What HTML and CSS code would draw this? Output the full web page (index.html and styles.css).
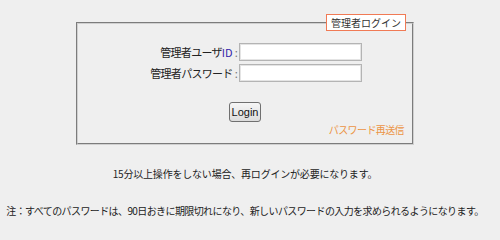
FILE: index.html
```html
<!DOCTYPE html>
<html lang="ja">
<head>
  <meta charset="UTF-8" />
  <title>管理者ログイン</title>
  <link rel="stylesheet" href="styles.css">
</head>
<body>
  <form class="login" method="POST" action="/login">
    <fieldset class="panel">
      <legend class="panel-title">管理者ログイン</legend>
      <div class="fields">
        <label class="field-label" for="uid">管理者ユーザ<span class="em">ID</span><span class="colon">:</span></label>
        <input class="field-input" id="uid" name="uid" type="text" />
        <label class="field-label" for="pw">管理者パスワード<span class="colon">:</span></label>
        <input class="field-input" id="pw" name="pw" type="password" />
      </div>
      <div class="actions">
        <button class="login-btn" type="submit">Login</button>
      </div>
      <div class="resend"><a href="#">パスワード再送信</a></div>
    </fieldset>
  </form>
  <p class="note">15分以上操作をしない場合、再ログインが必要になります。</p>
  <p class="note note-small">注：すべてのパスワードは、90日おきに期限切れになり、新しいパスワードの入力を求められるようになります。</p>
</body>
</html>
```

FILE: styles.css
```css
html, body {
  margin: 0;
  background: #efefef;
  font-family: "Noto Sans CJK JP", "Noto Sans", sans-serif;
  color: #222;
}
.login {
  margin: 0;
  padding-top: 14px;
}
.panel {
  margin: 0 0 0 76px;
  width: 338px;
  box-sizing: border-box;
  padding: 0 8px 6px 8px;
  border: 2px groove #d0d0d0;
  min-width: 0;
}
.panel-title {
  margin-left: auto;
  margin-right: -2px;
  padding: 0 4px;
  height: 17px;
  box-sizing: border-box;
  border: 1px solid #f07a55;
  background: #fff;
  font-size: 10px;
  line-height: 15px;
  color: #333;
}
.fields {
  display: grid;
  grid-template-columns: 90px 123px;
  column-gap: 2px;
  row-gap: 3px;
  margin: 12px 0 0 61px;
}
.field-label {
  text-align: right;
  font-size: 11px;
  line-height: 18px;
  color: #222;
  letter-spacing: -0.7px;
}
.field-label .em {
  color: #3322aa;
  letter-spacing: 0;
}
.field-label .colon {
  color: #777;
  margin-left: 2px;
}
.field-input {
  height: 18px;
  box-sizing: border-box;
  border: 1px solid #b4b4b4;
  box-shadow: inset 0 0 0 1px #e4e4e4;
  background: #fff;
  padding: 0 3px;
  font-size: 11px;
  margin: 0;
  outline: none;
}
.actions {
  display: flex;
  justify-content: center;
  margin-top: 20px;
}
.login-btn {
  height: 20px;
  padding: 0 2px;
  font-family: "Liberation Sans", Arial, sans-serif;
  font-size: 11px;
  color: #111;
  background: linear-gradient(#f6f6f6, #dcdcdc);
  border: 1px solid #707070;
  border-radius: 3px;
  cursor: pointer;
}
.resend {
  text-align: right;
  margin-top: 1px;
  font-size: 10px;
  line-height: 14px;
  letter-spacing: -0.6px;
}
.resend a {
  color: #ec9444;
  text-decoration: none;
}
.note {
  width: 490px;
  margin: 23px 0 0 0;
  text-align: center;
  font-size: 10px;
  line-height: 14px;
  color: #222;
  letter-spacing: -0.2px;
}
.note:first-of-type {
  margin-top: 22px;
}
.note-small {
  letter-spacing: -0.6px;
}
```
